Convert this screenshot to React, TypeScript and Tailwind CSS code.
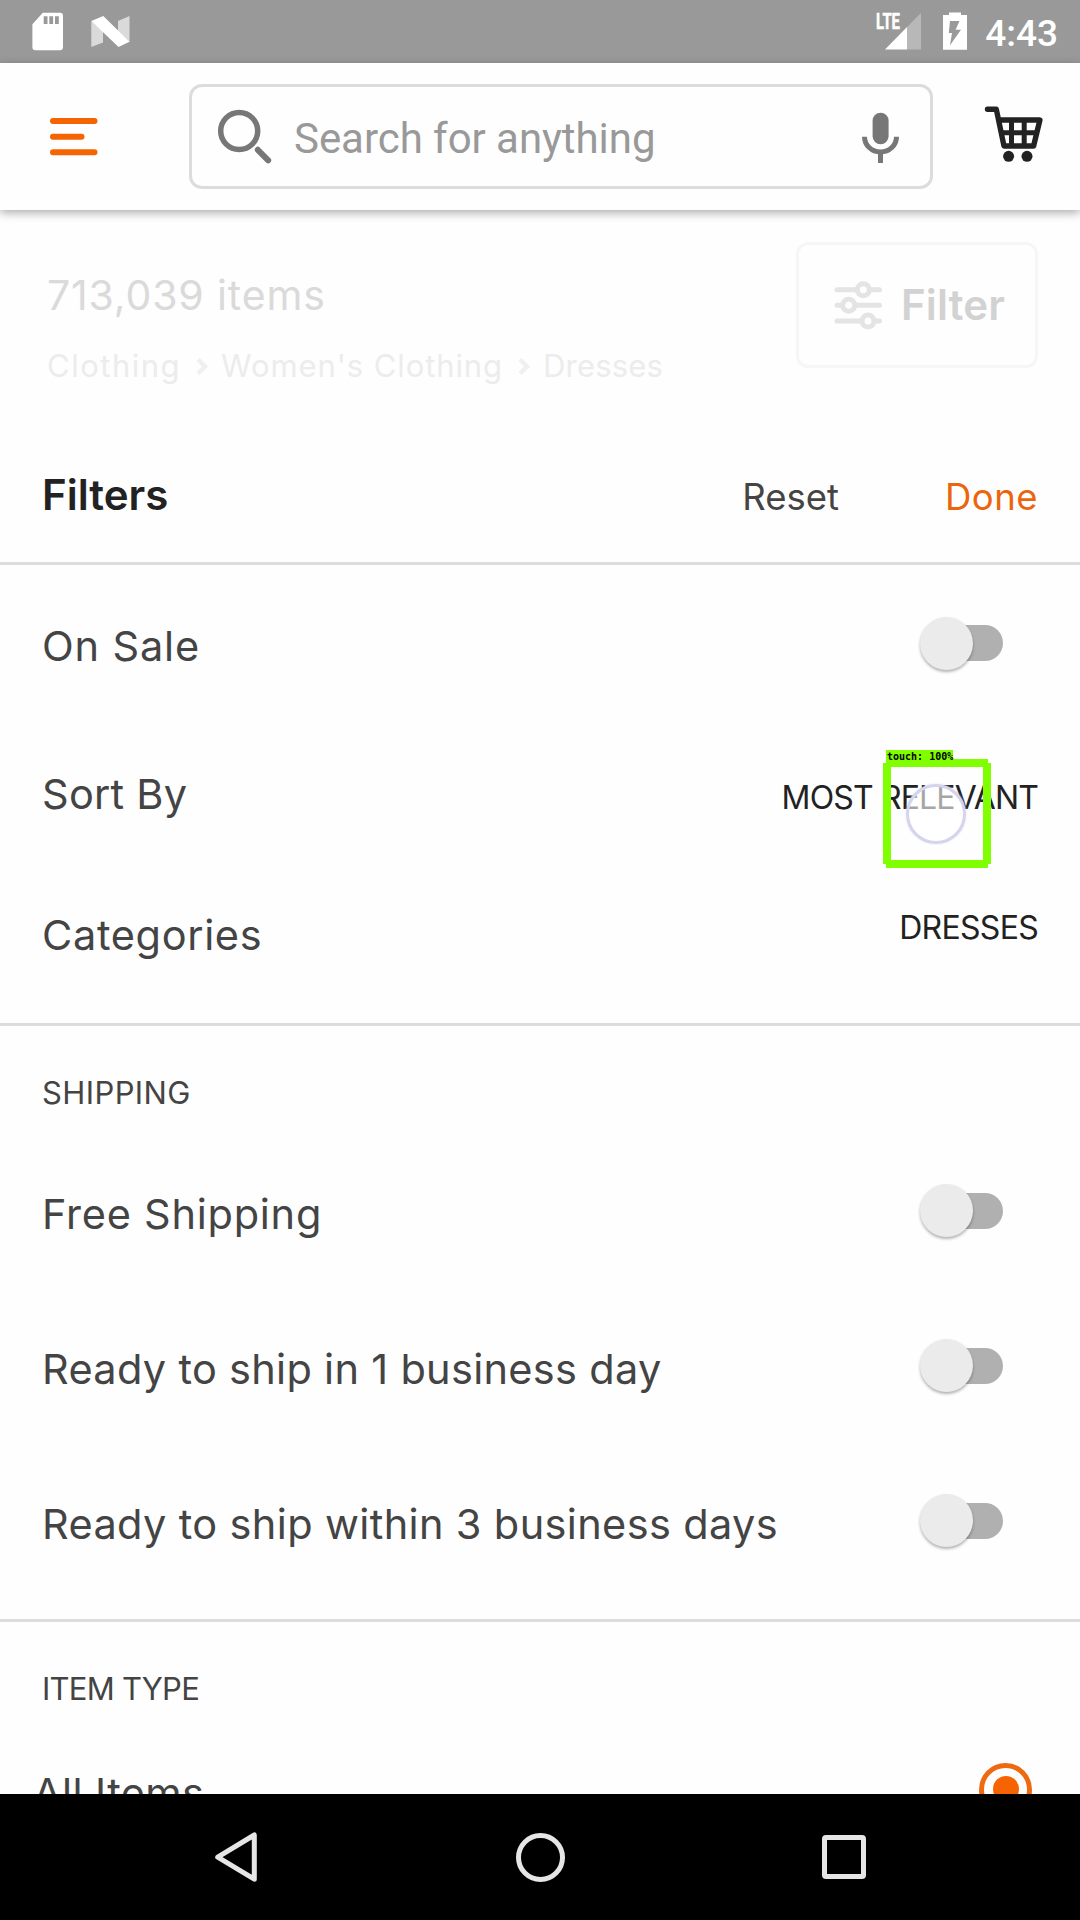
import React from "react";

function StatusBar() {
  return (
    <div className="flex h-[63px] shrink-0 items-start justify-between bg-[#999999]">
      <div className="flex">
        <svg className="ml-[32px] mt-[12px]" width="32" height="39" viewBox="32 12 32 39">
          <path
            fill="#fff"
            fillRule="evenodd"
            d="M42.8 12.8H60a3 3 0 0 1 3 3V47.3a3 3 0 0 1-3 3H35.4a3 3 0 0 1-3-3V24.2zM43.7 16.3v7.7h3.8v-7.7zM49.3 16.3v7.7h3.8v-7.7zM55 16.3v7.7h3.8v-7.7z"
          />
        </svg>
        <svg className="ml-[27px] mt-[15px]" width="39" height="33" viewBox="91 15 39 33">
          <path fill="#dadada" d="M91.3 21L103 31v11.5L91.3 47zM118 21l11.5-5v26L118 31z" />
          <path fill="#fff" d="M91.3 21l12-5 26.2 25.8-11 5.2z" />
        </svg>
      </div>
      <div className="flex">
        <svg className="mt-[12px] overflow-visible" width="46" height="39" viewBox="876 12 46 39">
          <path fill="#b8b8b8" d="M921 13v36.6h-14V27z" />
          <path fill="#fff" d="M885 49.6L907 27v22.6z" />
          <text
            x="876"
            y="29"
            fill="#fff"
            stroke="#fff"
            strokeWidth="0.5"
            fontSize="21.5"
            fontWeight="700"
            textLength="24"
            lengthAdjust="spacingAndGlyphs"
            className="font-['Roboto',sans-serif]"
          >
            LTE
          </text>
        </svg>
        <svg className="ml-[21px] mt-[12px]" width="24" height="38" viewBox="943 12 24 38">
          <path
            fill="#fff"
            fillRule="evenodd"
            d="M949 12.5h12v2.5h6v34.7h-24V15h6zM950 21l-1.2 12h3.2l-2 12.3 11-15.6h-5.4l3.9-8.7z"
          />
        </svg>
        <span className="ml-[18px] mr-[22px] mt-[12px] font-['Roboto',sans-serif] text-[37px] font-medium leading-[43px] text-white">
          4:43
        </span>
      </div>
    </div>
  );
}

function CartIcon() {
  return (
    <svg className="ml-[51px]" width="60" height="58" viewBox="984 105 60 58" fill="none" stroke="#222" strokeWidth="5.4" strokeLinecap="round" strokeLinejoin="round">
      <path d="M987.500 109.300h8.800l7.700 36.700h29.600l6.300-26H999" />
      <path strokeWidth="5" strokeLinecap="butt" d="M1011.500 120v26M1024.200 120v26M1001 132.800h36.500" />
      <circle cx="1008.600" cy="156.300" r="5.500" fill="#222" stroke="none" />
      <circle cx="1027" cy="156.300" r="5.500" fill="#222" stroke="none" />
    </svg>
  );
}

function Header() {
  return (
    <header className="relative z-10 flex h-[147px] shrink-0 items-start bg-[#fefefe] pt-[21px] shadow-[0_3px_9px_rgba(0,0,0,0.32)]">
      <svg className="ml-[49px] mt-[33px] shrink-0" width="49" height="40" viewBox="49 117 49 40" stroke="#f56400" strokeWidth="6" strokeLinecap="round">
        <path d="M53 121h41.500M53 136.700h28.500M53 152.300h41.500" />
      </svg>
      <div className="ml-[91px] flex h-[105px] w-[744px] shrink-0 items-start rounded-[13px] border-[3px] border-[#dcdcdc]">
        <svg className="ml-[24px] mt-[21px] shrink-0" width="56" height="56" viewBox="216 108 56 56" fill="none" stroke="#777" strokeLinecap="round">
          <circle cx="239.200" cy="131" r="18.500" strokeWidth="5.500" />
          <path strokeWidth="6" d="M257.800 149.800L268.200 160.300" />
        </svg>
        <span className="ml-[22px] mt-[27px] grow font-['Roboto',sans-serif] text-[42px] leading-[50px] tracking-[-0.05px] text-[#999]">
          Search for anything
        </span>
        <svg className="mr-[31px] mt-[25px] shrink-0" width="38" height="52" viewBox="861 112 38 52">
          <rect x="872.600" y="112.700" width="16" height="31.600" rx="8" fill="#777" />
          <path fill="none" stroke="#777" strokeWidth="5" d="M864.500 136.700a16 15.300 0 0 0 32 0M880.500 152v11" />
        </svg>
      </div>
      <div className="mt-[21px]">
        <CartIcon />
      </div>
    </header>
  );
}

function Chevron() {
  return (
    <svg className="ml-[14px] mr-[12px]" width="14" height="17" viewBox="0 0 14 17" fill="none" stroke="#f0f0f0" strokeWidth="4.500">
      <path d="M3 1.500l7 7-7 7" />
    </svg>
  );
}

function ResultsSummary() {
  return (
    <section className="flex h-[200px] shrink-0 items-start justify-between pl-[47px] pr-[42px]">
      <div>
        <div className="mt-[65px] text-[41px] leading-[40px] tracking-[0.85px] text-[#dadada]">713,039 items</div>
        <div className="mt-[31px] flex items-center text-[31px] leading-[40px] text-[#ececec]">
          <span className="tracking-[1.5px]">Clothing</span>
          <Chevron />
          <span className="tracking-[0.9px]">Women's Clothing</span>
          <Chevron />
          <span className="tracking-[0.2px]">Dresses</span>
        </div>
      </div>
      <div className="mt-[32px] flex h-[126px] w-[242px] items-start rounded-[12px] border-[3px] border-[#f6f6f6]">
        <svg className="ml-[35px] mt-[34px]" width="48" height="52" viewBox="834 279 48 52" fill="#fefefe" stroke="#e4e4e4" strokeLinecap="round">
          <path strokeWidth="5" d="M837 289.700h42.500M837 305.300h42.500M837 321h42.500" />
          <circle cx="863.300" cy="289.700" r="6" strokeWidth="5" />
          <circle cx="848.700" cy="305.300" r="6" strokeWidth="5" />
          <circle cx="868" cy="321" r="6" strokeWidth="5" />
        </svg>
        <span className="ml-[19px] mt-[39px] text-[42px] font-semibold leading-[42px] tracking-[0.15px] text-[#d2d2d2]">Filter</span>
      </div>
    </section>
  );
}

function Toggle() {
  return (
    <div className="mr-[35px] flex h-[36px] w-[83px] items-center rounded-full bg-gradient-to-r from-transparent from-30% to-[#b0b0b0] to-30%">
      <div className="size-[53px] shrink-0 rounded-full bg-[#ebebeb] shadow-[0_2px_3px_rgba(0,0,0,0.3)]" />
    </div>
  );
}

function ToggleRow({ label, height, spacing }: { label: string; height: string; spacing: string }) {
  return (
    <div className={`flex items-center justify-between ${height}`}>
      <span className={`text-[41.5px] leading-[50px] ${spacing}`}>{label}</span>
      <Toggle />
    </div>
  );
}

function TouchMarker() {
  return (
    <div className="absolute right-[89px] top-[29px] h-[118px] w-[108px]">
      <div className="absolute left-[23px] top-[34px] size-[60px] rounded-full border-[3px] border-[#d4d4ec] bg-white/60 shadow-[0_0_2px_#dcdcf2]" />
      <div className="absolute inset-x-[3px] bottom-0 top-[9px] border-y-[8px] border-[#80ff00]" />
      <div className="absolute inset-x-0 bottom-[4px] top-[13px] border-x-[8px] border-[#80ff00]" />
      <div className="absolute left-[3px] top-0 h-[12px] w-[67px] whitespace-pre bg-[#80ff00] pl-px font-['DejaVu_Sans_Mono',monospace] text-[10px] font-bold leading-[13px] text-black">
        touch: 100%
      </div>
    </div>
  );
}

function FiltersPanel() {
  return (
    <main className="flex min-h-0 grow flex-col overflow-hidden text-[#444]">
      <div className="flex h-[155px] shrink-0 items-baseline border-b-[3px] border-[#dcdcdc] pl-[42px] pr-[42px] pt-[60px]">
        <span className="grow text-[42px] font-semibold leading-[42px] text-[#222]">Filters</span>
        <span className="mr-[106px] text-[36.5px]">Reset</span>
        <span className="text-[36.5px] tracking-[0.5px] text-[#ea650d]">Done</span>
      </div>

      <section className="h-[461px] shrink-0 border-b-[3px] border-[#dcdcdc] px-[42px]">
        <ToggleRow label="On Sale" height="h-[156px]" spacing="pt-[5px] tracking-[0.85px]" />
        <div className="relative -mx-[42px] flex h-[146px] items-baseline justify-between px-[42px] pt-[52px]">
          <span className="text-[41.5px] leading-[42px] tracking-[0.25px]">Sort By</span>
          <span className="text-[32px] leading-[32px] tracking-[-0.85px] text-[#222]">MOST RELEVANT</span>
          <TouchMarker />
        </div>
        <div className="flex items-start justify-between pt-[45px]">
          <span className="mt-[2px] text-[41.5px] leading-[42px] tracking-[0.65px]">Categories</span>
          <span className="text-[32px] leading-[32px] tracking-[-0.7px] text-[#222]">DRESSES</span>
        </div>
      </section>

      <section className="h-[596px] shrink-0 border-b-[3px] border-[#dcdcdc] px-[42px]">
        <h2 className="h-[107px] pt-[51px] text-[31px] leading-[31px] tracking-[0.4px]">SHIPPING</h2>
        <ToggleRow label="Free Shipping" height="h-[155px]" spacing="pt-[7px] tracking-[0.75px]" />
        <ToggleRow label="Ready to ship in 1 business day" height="h-[155px]" spacing="pt-[7px] tracking-[0.3px]" />
        <ToggleRow label="Ready to ship within 3 business days" height="h-[155px]" spacing="pt-[7px] tracking-[0.36px]" />
      </section>

      <section className="shrink-0 px-[42px]">
        <h2 className="h-[107px] pt-[51px] text-[31px] leading-[31px] tracking-[-0.75px]">ITEM TYPE</h2>
        <div className="-ml-[9px] flex h-[120px] items-center justify-between">
          <span className="pt-[8px] text-[41.5px] leading-[50px] tracking-[0.4px]">All Items</span>
          <div className="mr-[6px] flex size-[53px] items-center justify-center rounded-full border-[5px] border-[#ee6a10]">
            <div className="size-[26px] rounded-full bg-[#f56400]" />
          </div>
        </div>
      </section>
    </main>
  );
}

function NavigationBar() {
  return (
    <nav className="relative z-10 flex h-[126px] shrink-0 items-center bg-black">
      <svg className="ml-[214px]" width="44" height="52" viewBox="214 1831 44 52" fill="none" stroke="#e6e6e6" strokeWidth="5" strokeLinejoin="round">
        <path d="M217.700 1857.200L254.300 1835v44.200z" />
      </svg>
      <div className="ml-[258px] size-[49px] rounded-full border-[5px] border-[#e6e6e6]" />
      <div className="ml-[257px] size-[44px] rounded-[4px] border-[5px] border-[#e6e6e6]" />
    </nav>
  );
}

export default function App() {
  return (
    <div className="flex h-[1920px] w-[1080px] flex-col overflow-hidden bg-[#fefefe] font-['Inter',sans-serif]">
      <StatusBar />
      <Header />
      <ResultsSummary />
      <FiltersPanel />
      <NavigationBar />
    </div>
  );
}
